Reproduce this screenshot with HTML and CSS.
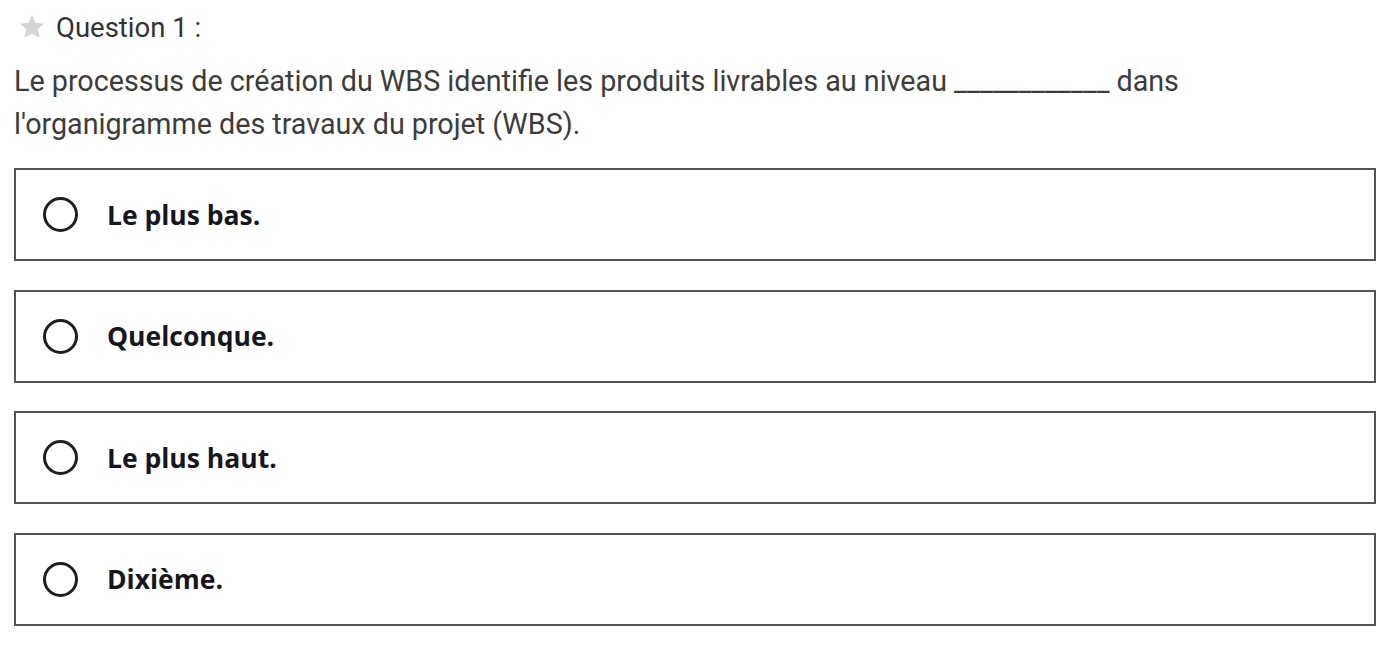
FILE: index.html
```html
<!DOCTYPE html>
<html lang="fr">
<head>
<meta charset="utf-8">
<link rel="stylesheet" href="styles.css">
</head>
<body>
<div class="page">
  <div class="qhead">
    <svg class="star" width="30" height="28" viewBox="0 0 24 24"><path d="M12 1.5l3.1 7 7.4.6-5.6 4.9 1.7 7.4L12 17.5l-6.6 3.9 1.7-7.4L1.5 9.1l7.4-.6z" fill="#d4d6da"/></svg>
    <span class="qlabel">Question 1 :</span>
  </div>
  <p class="qtext">Le processus de création du WBS identifie les produits livrables au niveau ____________ dans l'organigramme des travaux du projet (WBS).</p>
  <div class="options">
    <div class="option"><span class="radio"></span><span class="otext">Le plus bas.</span></div>
    <div class="option"><span class="radio"></span><span class="otext">Quelconque.</span></div>
    <div class="option"><span class="radio"></span><span class="otext">Le plus haut.</span></div>
    <div class="option"><span class="radio"></span><span class="otext">Dixième.</span></div>
  </div>
</div>
</body>
</html>
```
FILE: styles.css
```css
html, body { margin: 0; padding: 0; background: #fff; }
.page { padding: 10px 11px 0 14px; font-family: Roboto, "Liberation Sans", sans-serif; color: #3a3a3a; }
.qhead { display: flex; align-items: center; height: 34px; }
.star { margin-left: 3px; margin-right: 9px; }
.qlabel { font-size: 27.5px; color: #333; }
.qtext { margin: 16px 0 0 0; font-size: 28.7px; line-height: 43px; color: #3c3c3c; max-width: 1200px; }
.options { margin-top: 22px; display: flex; flex-direction: column; gap: 28.5px; }
.option { height: 89px; border: 2px solid #555; display: flex; align-items: center; padding-left: 27px; }
.radio { width: 29px; height: 29px; border: 3px solid #1f1f1f; border-radius: 50%; flex: none; }
.otext { margin-left: 29px; font-family: "Open Sans", sans-serif; font-weight: 700; font-size: 26.5px; color: #16161f; }
```
